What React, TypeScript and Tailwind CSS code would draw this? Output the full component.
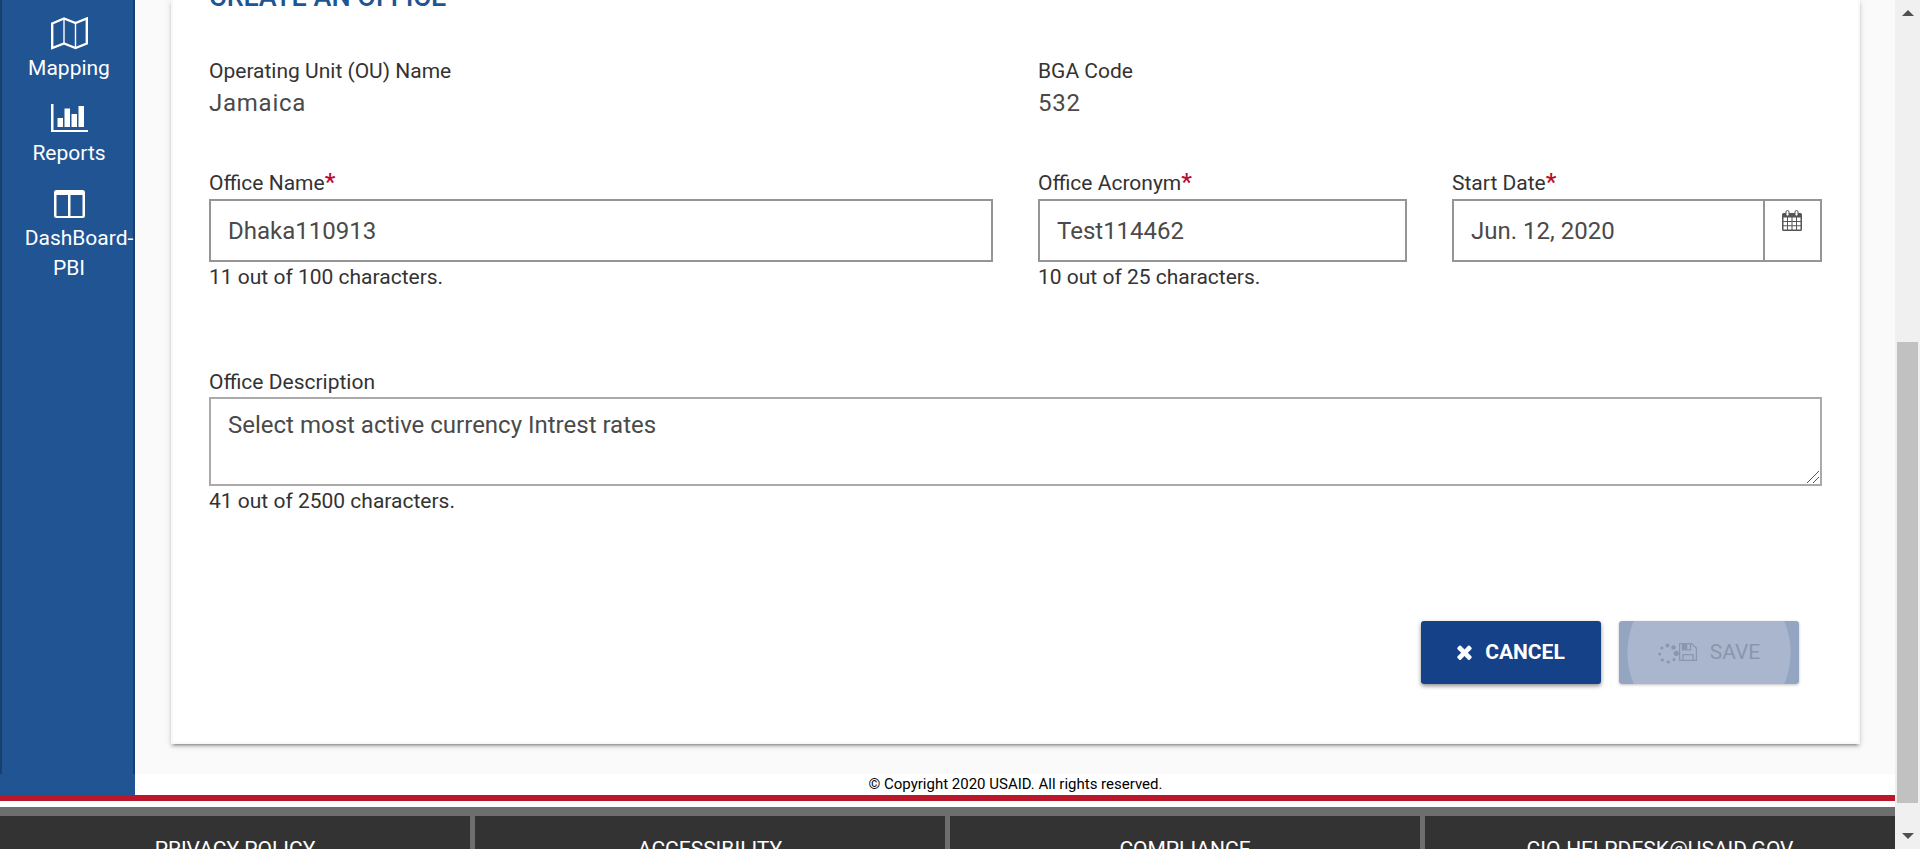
import { ReactNode } from 'react';

const MapIcon = () => (
  <svg width="37" height="33" viewBox="0 0 37 33" fill="none" stroke="#fff">
    <path strokeWidth="2.400" d="M1.200 6.500 13 1.500 24.500 6 35.800 1.500V26.500L24.500 31 13 26.500 1.200 31Z" />
    <path strokeWidth="1.400" d="M13 1.500V26.500M24.500 6V31" />
  </svg>
);

const ChartIcon = () => (
  <svg width="37" height="28" viewBox="0 0 37 28" fill="#fff">
    <path d="M0 0H2.500V26H37V28H0ZM6.500 14H12V23H6.500ZM13.500 4.500H19V23H13.500ZM20.500 10H26V23H20.500ZM27.500 2H33V23H27.500Z" />
  </svg>
);

const ColumnsIcon = () => (
  <svg width="31" height="28" viewBox="0 0 31 28" fill="#fff">
    <path fillRule="evenodd" d="M2.500 0H28.500Q31 0 31 2.500V25.500Q31 28 28.500 28H2.500Q0 28 0 25.500V2.500Q0 0 2.500 0ZM2.500 5V26H14V5ZM16.500 5V26H28.500V5Z" />
  </svg>
);

const CalendarIcon = () => (
  <svg width="20" height="21" viewBox="0 0 20 21">
    <path fill="#555" fillRule="evenodd" d="M1.500 3H18.500Q20 3 20 4.500V19.500Q20 21 18.500 21H1.500Q0 21 0 19.500V4.500Q0 3 1.500 3ZM1.500 7.500V11H5V7.500ZM6 7.500V11H9.500V7.500ZM10.500 7.500V11H14V7.500ZM15 7.500V11H18.500V7.500ZM1.500 12V15.300H5V12ZM6 12V15.300H9.500V12ZM10.500 12V15.300H14V12ZM15 12V15.300H18.500V12ZM1.500 16.300V19.500H5V16.300ZM6 16.300V19.500H9.500V16.300ZM10.500 16.300V19.500H14V16.300ZM15 16.300V19.500H18.500V16.300Z" />
    <rect x="4" y="0.500" width="3" height="5.500" rx="1.500" fill="#fff" stroke="#555" />
    <rect x="13" y="0.500" width="3" height="5.500" rx="1.500" fill="#fff" stroke="#555" />
  </svg>
);

const TimesIcon = () => (
  <svg width="15" height="15" viewBox="302 324 1188 1230" fill="#fff">
    <path d="M1490 1322q0 40-28 68l-136 136q-28 28-68 28t-68-28l-294-294-294 294q-28 28-68 28t-68-28l-136-136q-28-28-28-68t28-68l294-294-294-294q-28-28-28-68t28-68l136-136q28-28 68-28t68 28l294 294 294-294q28-28 68-28t68 28l136 136q28 28 28 68t-28 68l-294 294 294 294q28 28 28 68z" />
  </svg>
);

const SpinnerIcon = () => (
  <svg className="mt-[2px]" width="21" height="21" viewBox="0 0 21 21" fill="#8996ab">
    <circle cx="9.500" cy="2.500" r="1.900" />
    <circle cx="15.500" cy="4.500" r="2.300" />
    <circle cx="18.300" cy="10.300" r="2.600" />
    <circle cx="16" cy="16.500" r="1.500" />
    <circle cx="10.300" cy="19" r="1.600" />
    <circle cx="4.300" cy="17" r="1.600" />
    <circle cx="1.700" cy="11" r="1.500" />
    <circle cx="3.900" cy="5" r="1.500" />
  </svg>
);

const SaveIcon = () => (
  <svg className="-mt-[2px]" width="18" height="18" viewBox="0 0 18 18" fill="none" stroke="#8996ab" strokeWidth="1.300">
    <path d="M0.600 0.600H12.500L17.400 5V17.400H0.600ZM4 17V11.600H14V17M3.500 1V6.800H11.500V1" />
    <path fill="#8996ab" stroke="none" d="M4 1H8.300V6.500H4Z" />
  </svg>
);

const NavItem = ({ icon, className, children }: { icon: ReactNode; className: string; children: ReactNode }) => (
  <a className={`flex flex-col items-center text-center text-[21px] leading-[30px] text-white ${className}`}>
    {icon}
    {children}
  </a>
);

const Label = ({ children, required }: { children: string; required?: boolean }) => (
  <label className={`block text-[21px] leading-[30px] whitespace-nowrap text-[#333] ${required ? 'h-[31px]' : 'h-[30px]'}`}>
    {children}
    {required && <span className="text-[24px] leading-none font-medium text-[#ba0c2f]">*</span>}
  </label>
);

const ReadOnlyValue = ({ children }: { children: string }) => (
  <p className="h-[36px] text-[24px] leading-[34px] tracking-[0.75px] text-[#4a4a4a]">{children}</p>
);

const Counter = ({ children }: { children: string }) => (
  <p className="text-[21px] leading-[30px] text-[#333]">{children}</p>
);

const Field = ({ value, className = '' }: { value: string; className?: string }) => (
  <input
    readOnly
    value={value}
    className={`block h-[63px] w-full border-2 border-[#959595] bg-white px-[17px] text-[24px] text-[#4a4a4a] outline-none ${className}`}
  />
);

const links = ['PRIVACY POLICY', 'ACCESSIBILITY', 'COMPLIANCE', 'CIO-HELPDESK@USAID.GOV'];

export default function App() {
  return (
    <div className="flex h-[849px] w-[1920px] overflow-hidden bg-white font-[Roboto,sans-serif]">
      <div className="flex w-[1895px] flex-col">
        <div className="flex h-[795px]">
          <nav className="h-[795px] w-[135px] shrink-0 bg-[#205493]">
            <div className="flex h-[774px] flex-col items-center border-x-2 border-[#183f6f] pt-[17px] pl-[3px]">
              <NavItem icon={<MapIcon />} className="gap-[3px]">Mapping</NavItem>
              <NavItem icon={<ChartIcon />} className="mt-[21px] gap-[6px]">Reports</NavItem>
              <NavItem icon={<ColumnsIcon />} className="mt-[22px] w-[88px]">
                <span className="mt-[5px] ml-[20px]">DashBoard-</span>
                <span>PBI</span>
              </NavItem>
            </div>
          </nav>
          <div className="flex flex-1 flex-col">
            <main className="h-[774px] bg-[#fafafa] px-[36px]">
              <section className="flex h-[744px] flex-col border-x-2 border-b-2 border-[#f8f8f8] bg-white px-[36px] shadow-[0_4px_2px_-3px_rgba(0,0,0,0.3),0_3px_3px_rgba(0,0,0,0.14),0_1px_7px_rgba(0,0,0,0.12)]">
                <h1 className="-mt-[21px] h-[34px] text-[27px] leading-[36px] font-medium whitespace-nowrap text-[#205493]">
                  CREATE AN OFFICE
                </h1>
                <div className="mt-[43px] grid grid-cols-[829px_1fr]">
                  <div>
                    <Label>Operating Unit (OU) Name</Label>
                    <ReadOnlyValue>Jamaica</ReadOnlyValue>
                  </div>
                  <div>
                    <Label>BGA Code</Label>
                    <ReadOnlyValue>532</ReadOnlyValue>
                  </div>
                </div>
                <div className="mt-[46px] grid grid-cols-[784px_369px_370px] gap-x-[45px]">
                  <div>
                    <Label required>Office Name</Label>
                    <Field value="Dhaka110913" />
                    <Counter>11 out of 100 characters.</Counter>
                  </div>
                  <div>
                    <Label required>Office Acronym</Label>
                    <Field value="Test114462" />
                    <Counter>10 out of 25 characters.</Counter>
                  </div>
                  <div>
                    <Label required>Start Date</Label>
                    <div className="flex">
                      <Field value="Jun. 12, 2020" className="border-r-0" />
                      <button className="flex h-[63px] w-[59px] shrink-0 justify-center border-2 border-[#959595] pt-[9px] pr-[1px]">
                        <CalendarIcon />
                      </button>
                    </div>
                  </div>
                </div>
                <div className="mt-[75px]">
                  <Label>Office Description</Label>
                  <div className="relative">
                    <textarea
                      readOnly
                      value="Select most active currency Intrest rates"
                      className="block h-[89px] w-full resize-none border-2 border-[#aaa] px-[17px] py-[9px] text-[24px] leading-[34px] text-[#4a4a4a] outline-none"
                    />
                    <svg className="absolute right-[3px] bottom-[3px]" width="12" height="12" stroke="#555" strokeWidth="1">
                      <path d="M0 12 12 0M6 12 12 6" />
                    </svg>
                  </div>
                  <Counter>41 out of 2500 characters.</Counter>
                </div>
                <div className="mt-[105px] flex justify-end gap-[18px] pr-[23px]">
                  <button className="flex h-[63px] w-[180px] items-center justify-center gap-[13px] rounded-[3px] bg-[#154188] text-[21px] font-bold text-white shadow-[0_2px_4px_rgba(0,0,0,0.45)]">
                    <TimesIcon />
                    CANCEL
                  </button>
                  <button
                    disabled
                    className="flex h-[63px] w-[180px] items-center justify-center rounded-[3px] bg-[radial-gradient(circle_at_center,#aab6ce_81px,#94a5c1_82px)] text-[21px] text-[#8996ab] shadow-[0_1px_3px_rgba(0,0,0,0.25)]"
                  >
                    <SpinnerIcon />
                    <SaveIcon />
                    <span className="ml-[13px]">SAVE</span>
                  </button>
                </div>
              </section>
            </main>
            <p className="text-center text-[15px] leading-[20px] text-black">© Copyright 2020 USAID. All rights reserved.</p>
          </div>
        </div>
        <div className="h-[6px] bg-[#ba172b]" />
        <footer className="mt-[6px] grid h-[42px] grid-cols-4 gap-x-[5px] overflow-hidden bg-[#6e6e6e] pt-[9px]">
          {links.map((text) => (
            <a key={text} className="h-[60px] bg-[#333] pt-[18px] text-center text-[21px] leading-[30px] text-white">
              {text}
            </a>
          ))}
        </footer>
      </div>
      <div className="flex w-[25px] flex-col items-center bg-[#f0f0f0]">
        <svg className="mt-[10px]" width="12" height="6" fill="#505050"><path d="M0 6 6 0 12 6Z" /></svg>
        <div className="mt-[326px] h-[461px] w-[21px] bg-[#c1c1c1]" />
        <svg className="mt-[30px]" width="12" height="6" fill="#505050"><path d="M0 0H12L6 6Z" /></svg>
      </div>
    </div>
  );
}
